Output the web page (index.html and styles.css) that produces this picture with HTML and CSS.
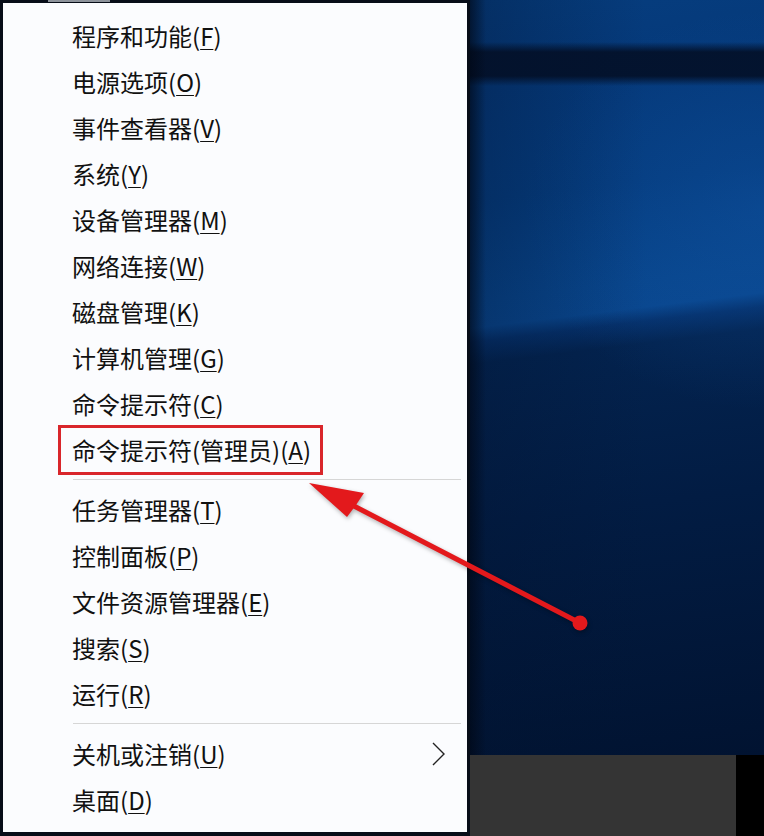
FILE: index.html
```html
<!DOCTYPE html>
<html lang="zh-CN">
<head>
<meta charset="utf-8">
<title>Win+X 菜单</title>
<link rel="stylesheet" href="styles.css">
</head>
<body>
<div class="screen">
  <div class="menu-col">
    <div class="topstrip"><span class="topstrip-seg"></span></div>
    <nav class="menu">
      <div class="item"><span class="label">程序和功能(<u>F</u>)</span></div>
      <div class="item"><span class="label">电源选项(<u>O</u>)</span></div>
      <div class="item"><span class="label">事件查看器(<u>V</u>)</span></div>
      <div class="item"><span class="label">系统(<u>Y</u>)</span></div>
      <div class="item"><span class="label">设备管理器(<u>M</u>)</span></div>
      <div class="item"><span class="label">网络连接(<u>W</u>)</span></div>
      <div class="item"><span class="label">磁盘管理(<u>K</u>)</span></div>
      <div class="item"><span class="label">计算机管理(<u>G</u>)</span></div>
      <div class="item"><span class="label">命令提示符(<u>C</u>)</span></div>
      <div class="item"><span class="label boxed">命令提示符(管理员)(<u>A</u>)</span></div>
      <div class="sep"></div>
      <div class="item"><span class="label">任务管理器(<u>T</u>)</span></div>
      <div class="item"><span class="label">控制面板(<u>P</u>)</span></div>
      <div class="item"><span class="label">文件资源管理器(<u>E</u>)</span></div>
      <div class="item"><span class="label">搜索(<u>S</u>)</span></div>
      <div class="item"><span class="label">运行(<u>R</u>)</span></div>
      <div class="sep"></div>
      <div class="item">
        <span class="label">关机或注销(<u>U</u>)</span>
        <svg class="chevron" width="13" height="24" viewBox="0 0 13 24"><path d="M1 1 L12 12 L1 23" fill="none" stroke="#222" stroke-width="1.4"/></svg>
      </div>
      <div class="item"><span class="label">桌面(<u>D</u>)</span></div>
    </nav>
  </div>
  <div class="desktop">
    <div class="wallpaper"></div>
    <div class="taskbar">
      <div class="taskbar-main"></div>
      <div class="taskbar-end"></div>
    </div>
  </div>
  <svg class="arrow" width="764" height="836" viewBox="0 0 764 836">
    <line x1="352" y1="505" x2="580" y2="623" stroke="#e3191c" stroke-width="5" stroke-linecap="round"/>
    <polygon points="309,483 364,493 356,505 347,517" fill="#e3191c"/>
    <circle cx="580" cy="623" r="7.5" fill="#e3191c"/>
  </svg>
</div>
</body>
</html>
```
FILE: styles.css
```css
html, body {
  margin: 0;
  padding: 0;
  background: #070d18;
}

.screen {
  position: relative;
  width: 764px;
  height: 836px;
  display: grid;
  grid-template-columns: 470px 1fr;
  background: #070d18;
  overflow: hidden;
}

.menu-col {
  display: flex;
  flex-direction: column;
  padding: 0 3px 4px 3px;
}

.topstrip {
  height: 3px;
  display: flex;
}

.topstrip-seg {
  margin-left: 45px;
  width: 62px;
  height: 2px;
  background: #8d939b;
}

.menu {
  flex: 1;
  background: #fbfcfe;
  padding-top: 10px;
  display: flex;
  flex-direction: column;
}

.item {
  height: 46px;
  flex: none;
  display: flex;
  align-items: center;
  justify-content: space-between;
  padding: 0 22px 0 69px;
  font-family: "Noto Sans CJK SC", "Noto Sans", sans-serif;
  font-size: 24px;
  color: #111;
}

.label {
  line-height: 24px;
  white-space: nowrap;
}

.label u {
  text-decoration-thickness: 1px;
  text-underline-offset: 3px;
}

.boxed {
  position: relative;
}

.boxed::after {
  content: "";
  position: absolute;
  left: -14px;
  right: -12px;
  top: -13px;
  bottom: -13px;
  border: 3px solid #d9262b;
}

.chevron {
  display: block;
}

.sep {
  height: 1px;
  flex: none;
  background: #d6d6d6;
  margin: 6px 6px 7px 70px;
}

.desktop {
  display: flex;
  flex-direction: column;
}

.wallpaper {
  flex: 1;
  background:
    linear-gradient(to right, rgba(0, 6, 18, 0.6), rgba(0, 6, 18, 0) 16px),
    linear-gradient(180deg, rgba(3, 14, 34, 0) 42px, rgba(3, 16, 40, 0.92) 52px, rgba(3, 16, 40, 0.92) 76px, rgba(3, 14, 34, 0) 86px),
    linear-gradient(to right, rgba(2, 20, 50, 0.35), rgba(2, 20, 50, 0) 60%),
    radial-gradient(ellipse 240px 200px at 100% 210px, rgba(20, 90, 175, 0.3), rgba(20, 90, 175, 0) 100%),
    linear-gradient(173deg, #063d7e 0px, #05397a 90px, #053c7e 200px, #08458b 300px, #09468d 326px, #05306a 340px, #03234f 362px, #021c43 520px, #011331 100%);
}

.taskbar {
  height: 81px;
  display: grid;
  grid-template-columns: 1fr 28px;
}

.taskbar-main {
  background: #343434;
}

.taskbar-end {
  background: #000;
}

.arrow {
  position: absolute;
  left: 0;
  top: 0;
  pointer-events: none;
  filter: drop-shadow(1px 2px 2px rgba(0, 0, 0, 0.3));
}
```
